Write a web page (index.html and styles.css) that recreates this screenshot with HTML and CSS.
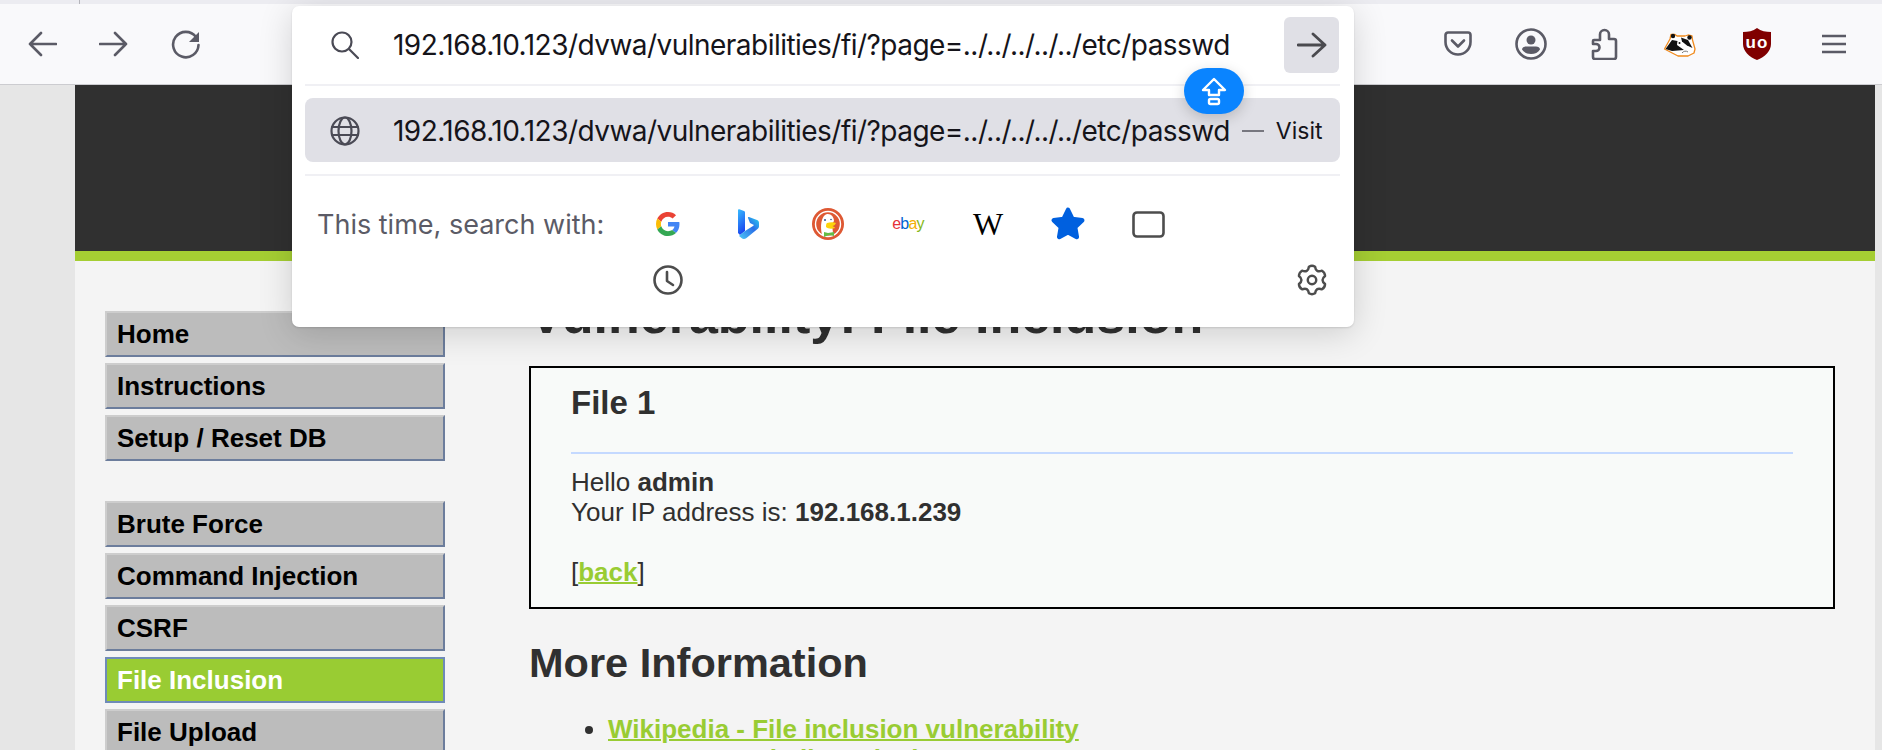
FILE: index.html
```html
<!DOCTYPE html>
<html>
  <head>
    <title>Vulnerability: File Inclusion</title>
    <meta charset="UTF-8">
    <link rel="stylesheet" href="styles.css">
  </head>

  <body>

    <!-- browser chrome -->
    <div class="tabstrip"><span class="tabsep"></span></div>
    <div class="toolbar">
      <div class="nav-left">
        <span class="tool"><svg width="30" height="26" viewBox="0 0 30 26" class="ico"><path d="M14 2 3 13l11 11M3 13h26"/></svg></span>
        <span class="tool"><svg width="30" height="26" viewBox="0 0 30 26" class="ico"><path d="M16 2l11 11-11 11M27 13H1"/></svg></span>
        <span class="tool"><svg width="30" height="30" viewBox="0 0 30 30" class="ico"><path d="M25 8A12.7 12.7 0 1 0 27.5 16"/><path d="M28 3v10H18z" class="solid"/></svg></span>
      </div>
      <div class="nav-right">
        <span class="tool"><svg width="28" height="26" viewBox="0 0 28 26" class="ico"><path d="M4 1.5h20a2.5 2.5 0 0 1 2.5 2.500V11a12.500 12.500 0 0 1-25 0V4A2.500 2.500 0 0 1 4 1.500z"/><path d="M8 9.500l6 6 6-6"/></svg></span>
        <span class="tool"><svg width="32" height="32" viewBox="0 0 32 32" class="ico"><circle cx="16" cy="16" r="14.500"/><circle cx="16" cy="12" r="4.500" class="solid"/><path d="M7 21.500c0-2 2-3 4-3h10c2 0 4 1 4 3-2 3-5 4.500-9 4.500s-7-1.500-9-4.500z" class="solid"/></svg></span>
        <span class="tool"><svg width="27" height="32" viewBox="0 0 27 32" class="ico"><path d="M3 12H9V6.500A4.500 4.500 0 0 1 18 6.500V11H23a2 2 0 0 1 2 2V29a2 2 0 0 1-2 2H4a2 2 0 0 1-2-2V23H5a3.500 3.500 0 0 0 0-7H2V13a1 1 0 0 1 1-1z"/></svg></span>
        <span class="tool">
          <svg width="33" height="25" viewBox="0 0 33 25">
            <path d="M1.500 17 7 7 8 2.500 12 2.500 14 4 22 4 25 3 29 4 29.500 8 32 17 31 21 25 24 15 24z" fill="#fff" stroke="#f08a1d" stroke-width="1.300" stroke-linejoin="round"/>
            <circle cx="10" cy="4" r="2.200" fill="#111"/>
            <circle cx="26.500" cy="5.500" r="2.200" fill="#111"/>
            <path d="M2.500 17 9 8 14.500 9 14 13 21 18 9 19z" fill="#111"/>
            <path d="M18 5.500 25 8 29.500 16 24 13.500 19 9.500z" fill="#111"/>
            <circle cx="16.500" cy="11" r="1.900" fill="#fff"/>
            <circle cx="16.500" cy="11" r="1" fill="#111"/>
            <path d="M19 21c1.500-2 4-2.500 6-1" fill="none" stroke="#777"/>
          </svg>
        </span>
        <span class="tool">
          <svg width="28" height="32" viewBox="0 0 28 32">
            <path d="M14 0C10 3 5 4 0 4v12c0 7 6 13 14 16 8-3 14-9 14-16V4C23 4 18 3 14 0z" fill="#800000"/>
            <text x="14" y="20" class="ublock-text">uo</text>
          </svg>
        </span>
        <span class="tool"><svg width="24" height="20" viewBox="0 0 24 20" class="ico"><path d="M0 2h24M0 10h24M0 18h24"/></svg></span>
      </div>
    </div>

    <!-- page under the browser chrome -->
    <div class="page">
      <div class="page-header"></div>
      <div class="page-body">
        <div class="sidebar">
          <div class="menu-group">
            <a class="menu-item">Home</a>
            <a class="menu-item">Instructions</a>
            <a class="menu-item">Setup / Reset DB</a>
          </div>
          <div class="menu-group">
            <a class="menu-item">Brute Force</a>
            <a class="menu-item">Command Injection</a>
            <a class="menu-item">CSRF</a>
            <a class="menu-item selected">File Inclusion</a>
            <a class="menu-item">File Upload</a>
          </div>
        </div>
        <div class="main">
          <h1>Vulnerability: File Inclusion</h1>
          <div class="file-box">
            <h3>File 1</h3>
            <hr>
            Hello <b>admin</b><br>
            Your IP address is: <b>192.168.1.239</b><br>
            <br>
            [<a class="link" href="#">back</a>]
          </div>
          <h2>More Information</h2>
          <ul>
            <li><a class="link" href="#">Wikipedia - File inclusion vulnerability</a></li>
            <li><a class="link" href="#">WSTG - Local File Inclusion</a></li>
            <li><a class="link" href="#">WSTG - Remote File Inclusion</a></li>
          </ul>
        </div>
      </div>
    </div>

    <!-- url bar dropdown, lies over the page -->
    <div class="urlbar">
      <div class="url-input">
        <span class="url-icon"><svg width="28" height="28" viewBox="0 0 28 28" class="ico thin"><circle cx="11" cy="11" r="9.500"/><path d="M18 18l9 9"/></svg></span>
        <span class="url-text">192.168.10.123/dvwa/vulnerabilities/fi/?page=../../../../../etc/passwd</span>
        <span class="go-btn"><svg width="30" height="26" viewBox="0 0 30 26" class="ico dark"><path d="M16 2l12 11-12 11M28 13H1"/></svg></span>
      </div>
      <div class="url-sep"></div>
      <div class="url-result">
        <span class="url-icon"><svg width="30" height="30" viewBox="0 0 30 30" class="ico thin"><circle cx="15" cy="15" r="13.500"/><ellipse cx="15" cy="15" rx="6.500" ry="13.500"/><path d="M2 11h26M2 19h26"/></svg></span>
        <span class="url-text">192.168.10.123/dvwa/vulnerabilities/fi/?page=../../../../../etc/passwd</span>
        <span class="dash"></span>
        <span class="visit">Visit</span>
      </div>
      <div class="url-sep"></div>
      <div class="engines">
        <span class="engines-label">This time, search with:</span>
        <span class="engine">
          <svg width="24" height="24" viewBox="0 0 48 48">
            <path fill="#EA4335" d="M24 9.500c3.540 0 6.710 1.220 9.210 3.600l6.850-6.850C35.900 2.380 30.470 0 24 0 14.620 0 6.510 5.380 2.560 13.220l7.980 6.190C12.430 13.720 17.740 9.500 24 9.500z"/>
            <path fill="#4285F4" d="M46.980 24.550c0-1.570-.15-3.090-.38-4.550H24v9.020h12.940c-.58 2.960-2.260 5.480-4.780 7.180l7.730 6c4.510-4.180 7.090-10.360 7.090-17.650z"/>
            <path fill="#FBBC05" d="M10.530 28.590c-.48-1.450-.76-2.990-.76-4.590s.27-3.140.76-4.590l-7.980-6.190C.92 16.460 0 20.120 0 24c0 3.880.92 7.540 2.560 10.780l7.970-6.190z"/>
            <path fill="#34A853" d="M24 48c6.480 0 11.930-2.130 15.890-5.810l-7.730-6c-2.150 1.450-4.920 2.300-8.160 2.300-6.260 0-11.570-4.220-13.470-9.910l-7.980 6.190C6.510 42.620 14.620 48 24 48z"/>
          </svg>
        </span>
        <span class="engine">
          <svg width="21" height="30" viewBox="0 0 21 30">
            <defs>
              <linearGradient id="bingA" x1="0" y1="0" x2="0.300" y2="1"><stop offset="0" stop-color="#37bdff"/><stop offset="1" stop-color="#1b48ef"/></linearGradient>
              <linearGradient id="bingB" x1="0" y1="1" x2="1" y2="0"><stop offset="0" stop-color="#4dc8f5"/><stop offset="0.600" stop-color="#2a6fe8"/><stop offset="1" stop-color="#2bd4f0"/></linearGradient>
            </defs>
            <path d="M0 1c0-1 1-1 2-.5L6 2c.7.300 1 .8 1 1.500V22L2 26 0 24z" fill="url(#bingA)"/>
            <path d="M2 26 7 22l8-5c1-.6 1-1 0-1.500l-3-1.500-2-5c-.3-.9.2-1.200 1-.9l8 3c1.500.6 2 1.400 2 3v3c0 1.500-.4 2.300-1.800 3.200L8.500 29c-2 1.300-3.500 1.200-5 0L1 27z" fill="url(#bingB)"/>
          </svg>
        </span>
        <span class="engine">
          <svg width="32" height="32" viewBox="0 0 32 32">
            <circle cx="16" cy="16" r="16" fill="#de5833"/>
            <circle cx="16" cy="16" r="13.200" fill="#fff"/>
            <circle cx="16" cy="16" r="11.800" fill="#de5833"/>
            <path d="M10 27C8 18 9 8 15 6c4-.5 7 3 7 7l-2 3 1 9c-3 2-8 3-11 2z" fill="#fff"/>
            <circle cx="13" cy="12" r="1" fill="#2d4f8e"/>
            <circle cx="19" cy="11.500" r=".8" fill="#2d4f8e"/>
            <path d="M15 15c3-1 7-1 9 0-1 2-2 3-4 3 2 1 3 1 3 2-3 1-7 1-9-1 0-2 0-3 1-4z" fill="#fdd20a"/>
            <path d="M12 24l4 1 6-1v4l-5-1-5 2z" fill="#65bc46"/>
          </svg>
        </span>
        <span class="engine ebay"><span class="eb-e">e</span><span class="eb-b">b</span><span class="eb-a">a</span><span class="eb-y">y</span></span>
        <span class="engine wiki">W</span>
        <span class="engine">
          <svg width="36" height="35" viewBox="0 0 32 31"><path d="M16 2.500l3.900 8 8.700 1.300-6.300 6.100 1.500 8.700L16 22.400l-7.800 4.200 1.500-8.700-6.300-6.100 8.700-1.300z" fill="#0060df" stroke="#0060df" stroke-width="4" stroke-linejoin="round"/></svg>
        </span>
        <span class="engine">
          <svg width="33" height="27" viewBox="0 0 33 27" class="ico gray"><rect x="1.500" y="1.500" width="30" height="24" rx="3.500"/></svg>
        </span>
        <span class="engine clock">
          <svg width="30" height="30" viewBox="0 0 30 30" class="ico gray"><circle cx="15" cy="15" r="13.500"/><path d="M14 7v9l6 4"/></svg>
        </span>
        <span class="engine gear">
          <svg width="32" height="32" viewBox="-17 -17 34 34" class="ico gray">
            <path d="M-3.260 -14.130Q0 -16 3.260 -14.130Q4.250 -7.360 10.600 -9.890Q13.860 -8 13.870 -4.240Q8.500 0 13.870 4.240Q13.860 8 10.600 9.890Q4.250 7.360 3.260 14.130Q0 16 -3.260 14.130Q-4.250 7.360 -10.600 9.890Q-13.860 8 -13.870 4.240Q-8.500 0 -13.870 -4.240Q-13.860 -8 -10.600 -9.890Q-4.250 -7.360 -3.260 -14.130z"/>
            <circle r="4.500"/>
          </svg>
        </span>
      </div>
    </div>

    <!-- shift key hint -->
    <div class="shift-hint">
      <svg width="30" height="30" viewBox="0 0 30 30" class="ico white"><path d="M15 3 26 14H20V19H10V14H4z"/><rect x="10" y="23" width="10" height="5" rx="1.500"/></svg>
    </div>

  </body>
</html>
```

FILE: styles.css
```css
html, body {
  margin: 0;
  height: 750px;
  overflow: hidden;
}

body {
  position: relative;
  background-color: #e6e6e6;
  font-family: "Liberation Sans", Arial, sans-serif;
  color: #303030;
}

/* icons */
.ico {
  fill: none;
  stroke: #5b5b66;
  stroke-width: 2.6;
  stroke-linecap: round;
  stroke-linejoin: round;
}

.ico .solid {
  fill: #5b5b66;
  stroke: none;
}

.ico.thin {
  stroke: #4a4a55;
  stroke-width: 2.2;
}

.ico.dark {
  stroke: #4a4a4f;
  stroke-width: 2.8;
}

.ico.gray {
  stroke: #4d4d4d;
  stroke-width: 2.6;
}

.ico.white {
  stroke: #fff;
  stroke-width: 2.4;
}

.ublock-text {
  font: bold 17px "Liberation Sans", sans-serif;
  letter-spacing: 1px;
  fill: #fff;
  text-anchor: middle;
}

/* browser chrome */
.tabstrip {
  height: 4px;
  background-color: #ececf1;
}

.tabsep {
  display: block;
  width: 1px;
  height: 4px;
  margin-left: 79px;
  background-color: #b5b5bb;
}

.toolbar {
  display: flex;
  justify-content: space-between;
  height: 80px;
  background-color: #f9f9fb;
  border-bottom: 1px solid #ccccd0;
  box-sizing: content-box;
}

.nav-left {
  display: grid;
  grid-template-columns: 72px 72px 72px;
  padding-left: 6px;
}

.nav-right {
  display: grid;
  grid-template-columns: 72px 73px 74px 77px 78px 76px;
  padding-right: 10px;
}

.tool {
  display: flex;
  align-items: center;
  justify-content: center;
}

/* page */
.page {
  margin: 0 7px 0 75px;
}

.page-header {
  height: 166px;
  background-color: #303030;
  border-bottom: 10px solid #a5ce33;
}

.page-body {
  display: flex;
  background-color: #f4f4f4;
}

.sidebar {
  width: 340px;
  margin-left: 30px;
  padding-top: 50px;
}

.menu-group {
  display: flex;
  flex-direction: column;
  gap: 6px;
  margin-bottom: 40px;
}

.menu-item {
  height: 42px;
  padding-left: 10px;
  background-color: #bcbcbc;
  border-style: solid;
  border-width: 2px;
  border-color: #cdcdcd #6c7d9c #6c7d9c #cdcdcd;
  color: #000;
  font-size: 26px;
  font-weight: bold;
  line-height: 42px;
}

.menu-item.selected {
  background-color: #99cc33;
  border-color: #6f8bb8;
  color: #fff;
}

.main {
  flex: 1;
  margin-left: 84px;
  margin-right: 40px;
  padding-top: 24px;
  font-size: 26px;
  line-height: 30px;
}

h1 {
  margin: 0 0 21px;
  font-size: 52px;
  line-height: 60px;
}

.file-box {
  padding: 15px 40px 20px;
  background-color: #f8faf9;
  border: 2px solid #000;
}

h3 {
  margin: 0 0 29px;
  font-size: 33px;
  line-height: 40px;
}

hr {
  height: 2px;
  margin: 0 0 13px;
  border: none;
  background-color: #c4d9ff;
}

h2 {
  margin: 29px 0 26px;
  font-size: 41.500px;
  line-height: 50px;
}

ul {
  margin: 0;
  padding-left: 79px;
}

.link {
  color: #99cc33;
  font-size: 26px;
  font-weight: bold;
  text-decoration-thickness: 2px;
}

/* url bar dropdown */
.urlbar {
  position: absolute;
  left: 292px;
  top: 6px;
  width: 1062px;
  height: 321px;
  padding: 0 14px 0 13px;
  box-sizing: border-box;
  background-color: #fff;
  border-radius: 7px;
  box-shadow: 0 1px 2px rgba(0, 0, 0, 0.12), 0 6px 34px rgba(0, 0, 0, 0.16);
  font-family: Inter, "Noto Sans", sans-serif;
  color: #15141a;
}

.url-input {
  display: flex;
  align-items: center;
  height: 78px;
}

.url-result {
  display: flex;
  align-items: center;
  box-sizing: border-box;
  height: 64px;
  margin: 12px 0;
  padding-top: 2px;
  background-color: #e0e0e6;
  border-radius: 8px;
}

.url-icon {
  display: flex;
  align-items: center;
  justify-content: center;
  width: 80px;
  margin-right: 8px;
}

.url-text {
  font-size: 28px;
  letter-spacing: -0.53px;
  white-space: nowrap;
}

.go-btn {
  display: flex;
  align-items: center;
  justify-content: center;
  width: 55px;
  height: 56px;
  margin-left: auto;
  margin-right: 1px;
  background-color: #e0e0e6;
  border-radius: 6px;
}

.url-sep {
  height: 2px;
  background-color: #f0f0f4;
}

.dash {
  width: 22px;
  height: 2px;
  margin-left: 12px;
  background-color: #77777f;
}

.visit {
  margin-left: 12px;
  font-size: 23px;
}

.engines {
  display: grid;
  grid-template-columns: 323px repeat(7, 80px) 1fr;
  grid-auto-rows: 56px;
  padding-top: 20px;
}

.engines-label {
  align-self: center;
  padding-left: 12px;
  color: #5b5b66;
  font-size: 27px;
  white-space: nowrap;
}

.engine {
  display: flex;
  align-items: center;
  justify-content: center;
}

.ebay {
  font-family: "Liberation Sans", sans-serif;
  font-size: 16px;
  letter-spacing: -0.8px;
}

.eb-e { color: #e53238; }
.eb-b { color: #0064d2; }
.eb-a { color: #f5af02; }
.eb-y { color: #86b817; }

.wiki {
  font-family: "Liberation Serif", serif;
  font-size: 32px;
  color: #000;
}

.clock {
  grid-column: 2;
  grid-row: 2;
}

.gear {
  grid-column: 9;
  grid-row: 2;
  justify-self: end;
  width: 56px;
}

/* shift key hint */
.shift-hint {
  position: absolute;
  left: 1184px;
  top: 68px;
  display: flex;
  align-items: center;
  justify-content: center;
  width: 60px;
  height: 46px;
  background-color: #0a84ff;
  border-radius: 23px;
  box-shadow: 0 4px 14px rgba(0, 0, 0, 0.18);
}
```
